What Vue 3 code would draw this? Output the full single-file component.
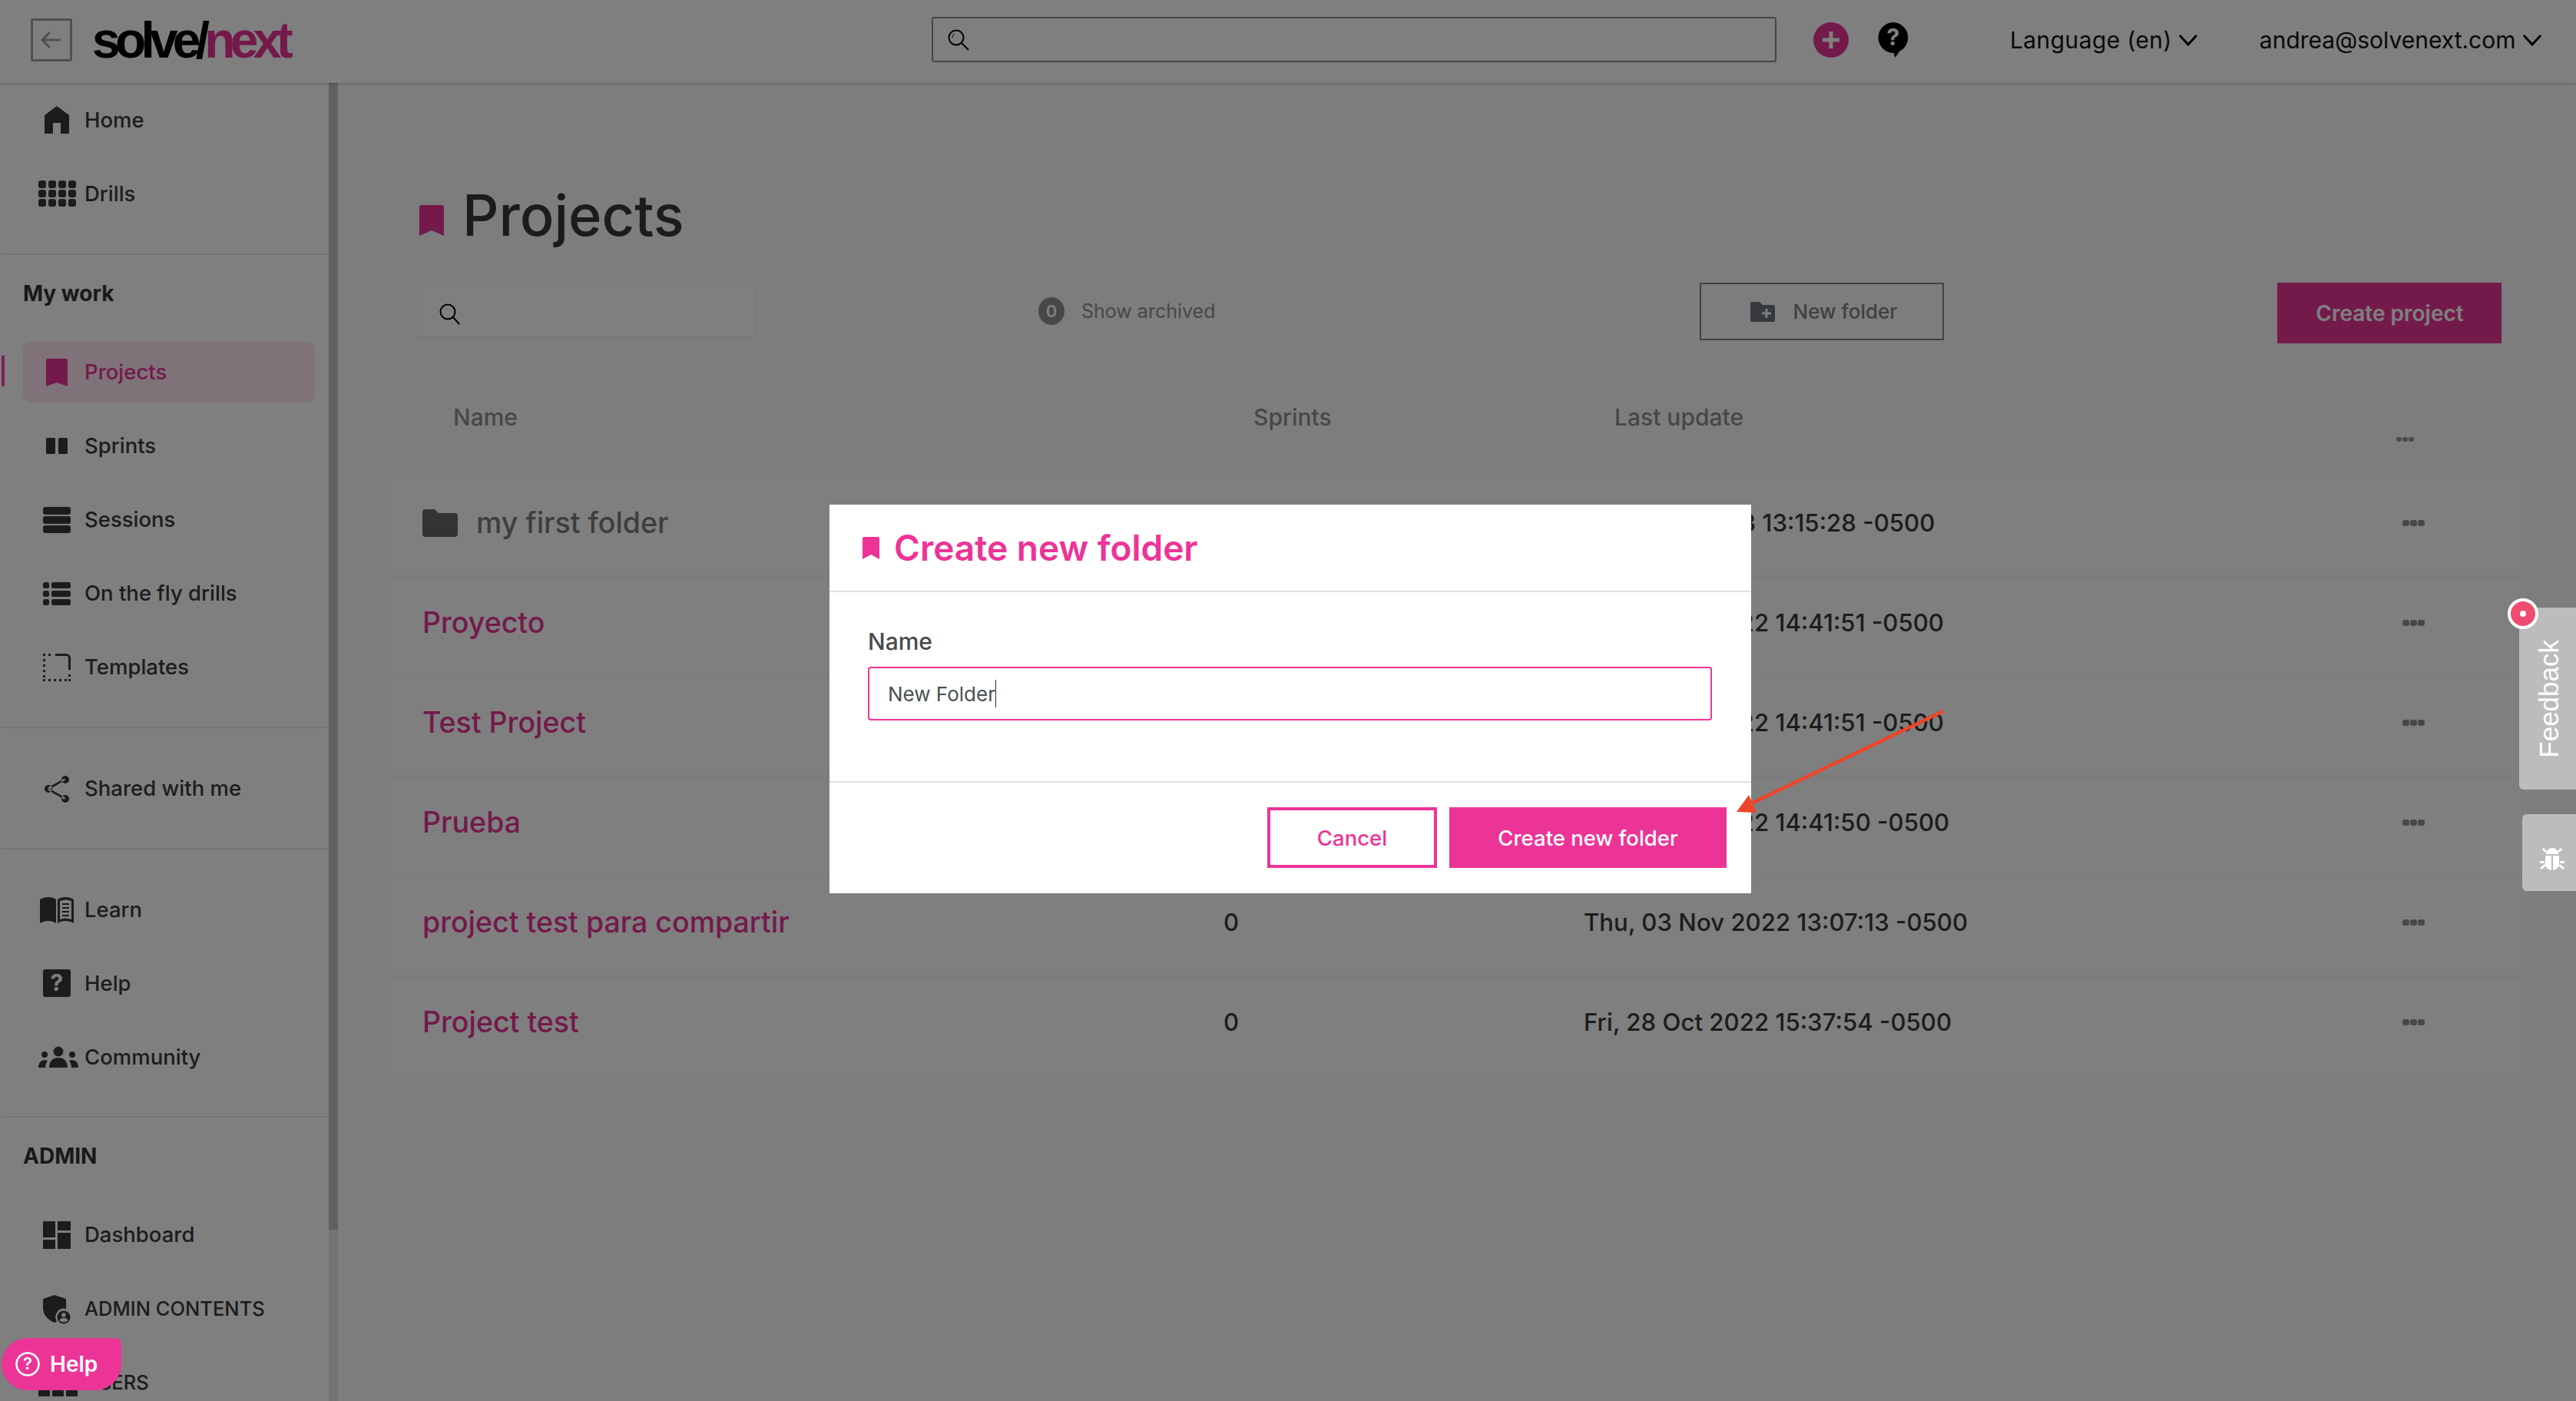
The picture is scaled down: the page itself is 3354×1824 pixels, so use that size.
<template>
  <div class="app">
    <header class="topbar">
      <div class="top-left">
        <button class="back">
          <svg width="30" height="26" viewBox="0 0 30 26"><path d="M27 13H4M13 3L3 13l10 10" fill="none" stroke="#a0a0a0" stroke-width="3"/></svg>
        </button>
        <div class="logo">solve/<span>next</span></div>
      </div>
      <div class="top-search">
        <svg class="lens" width="28" height="28" viewBox="0 0 28 28"><circle cx="11" cy="11" r="9.5" fill="none" stroke="#000" stroke-width="2"/><path d="M18 18l9 9" stroke="#000" stroke-width="2"/><path d="M6 11a5 5 0 0 1 3-5" fill="none" stroke="#000" stroke-width="1"/></svg>
      </div>
      <div class="plus"><svg width="26" height="26" viewBox="0 0 26 26"><path d="M13 2v22M2 13h22" stroke="#fff" stroke-width="5"/></svg></div>
      <div class="bubble">
        <svg width="40" height="46" viewBox="0 0 40 46"><path d="M20 0a20 20 0 0 1 8 38c-2 3-4 6-6 8l-1-6A20 20 0 0 1 20 0Z" fill="#000"/><text x="20" y="30" text-anchor="middle" class="bubble-q">?</text></svg>
      </div>
      <div class="lang">Language (en)<svg class="chev" width="26" height="16" viewBox="0 0 26 16"><path d="M2 2l11 12L24 2" fill="none" stroke="#000" stroke-width="3"/></svg></div>
      <div class="user">andrea@solvenext.com<svg class="chev" width="26" height="16" viewBox="0 0 26 16"><path d="M2 2l11 12L24 2" fill="none" stroke="#000" stroke-width="3"/></svg></div>
    </header>

    <div class="body">
      <aside class="sidebar">
        <section v-for="(group, i) in groups" :key="i" class="group" :class="group.cls">
          <h3 v-if="group.title">{{ group.title }}</h3>
          <a v-for="item in group.items" :key="item.label" class="nav" :class="{ active: item.active, upper: item.upper }">
            <svg class="nav-icon" width="52" height="40" viewBox="0 0 52 40">
              <path :d="icons[item.icon]" fill-rule="evenodd"/>
              <text v-if="item.icon === 'help'" x="26" y="30" text-anchor="middle" class="help-q">?</text>
            </svg>
            <span>{{ item.label }}</span>
          </a>
        </section>
      </aside>
      <div class="scroll"><div class="thumb"></div></div>

      <main class="main">
        <h1 class="title">
          <svg width="32" height="40" viewBox="0 0 32 40"><path d="M3 0H29a3 3 0 0 1 3 3V40L16 33 0 40V3a3 3 0 0 1 3-3Z" fill="#e63496"/></svg>
          Projects
        </h1>
        <div class="toolbar">
          <div class="search">
            <svg width="28" height="28" viewBox="0 0 28 28"><circle cx="11" cy="11" r="9.5" fill="none" stroke="#000" stroke-width="2"/><path d="M18 18l8 9" stroke="#000" stroke-width="2"/></svg>
          </div>
          <div class="toggle"><span class="knob">0</span>Show archived</div>
          <button class="new-folder">
            <svg width="32" height="26" viewBox="0 0 32 26"><path d="M2 0h10l4 4h14a2 2 0 0 1 2 2v18a2 2 0 0 1-2 2H2a2 2 0 0 1-2-2V2a2 2 0 0 1 2-2Z" fill="#6c747c"/><path d="M21 9v12M15 15h12" stroke="#fff" stroke-width="3"/></svg>
            New folder
          </button>
          <button class="create">Create project</button>
        </div>

        <div class="table-head">
          <span>Name</span><span>Sprints</span><span>Last update</span>
          <i class="dots small"><b></b><b></b><b></b></i>
        </div>
        <div class="rows">
          <div v-for="row in rows" :key="row.name" class="row">
            <div class="name" :class="{ folder: row.folder }">
              <svg v-if="row.folder" width="46" height="36" viewBox="0 0 46 36"><path d="M4 0h12l5 5h21a4 4 0 0 1 4 4v23a4 4 0 0 1-4 4H4a4 4 0 0 1-4-4V4a4 4 0 0 1 4-4Z" fill="#666"/></svg>
              {{ row.name }}
            </div>
            <div class="count">{{ row.sprints }}</div>
            <div class="date">{{ row.date }}</div>
            <i class="dots"><b></b><b></b><b></b></i>
          </div>
        </div>
      </main>
    </div>

    <div class="overlay"></div>

    <div class="modal">
      <div class="modal-head">
        <svg width="22" height="29" viewBox="0 0 22 29"><path d="M2 0H20a2 2 0 0 1 2 2V29L11 23 0 29V2a2 2 0 0 1 2-2Z" fill="#ec3497"/></svg>
        Create new folder
      </div>
      <div class="modal-body">
        <label>Name</label>
        <div class="field">New Folder<span class="caret"></span></div>
      </div>
      <div class="modal-foot">
        <button class="cancel">Cancel</button>
        <button class="confirm">Create new folder</button>
      </div>
    </div>

    <svg class="arrow" width="290" height="145" viewBox="0 0 290 145">
      <path d="M280 6L26 128" stroke="#ee4528" stroke-width="4.5" fill="none"/>
      <path d="M11 137L27 115L37 138Z" fill="#ee4528"/>
    </svg>

    <div class="feedback">
      <span>Feedback</span>
      <div class="badge"><div></div></div>
    </div>
    <div class="bug">
      <svg width="34" height="34" viewBox="0 0 34 34"><path d="M9 11a8 8 0 0 1 16 0ZM8 13h8v19c-5-1-8-4-8-9ZM18 13h8v10c0 5-3 8-8 9ZM1 20h6v3H1ZM27 20h6v3h-6ZM4 5l2-2 4 4-2 2ZM30 5l-2-2-4 4 2 2ZM3 31l-2-2 6-5 2 2ZM31 31l2-2-6-5-2 2Z" fill="#fff"/></svg>
    </div>
    <div class="help-btn">
      <svg width="32" height="32" viewBox="0 0 32 32"><circle cx="16" cy="16" r="14.5" fill="none" stroke="#fff" stroke-width="2.5"/><text x="16" y="23" text-anchor="middle" class="help-btn-q">?</text></svg>
      Help
    </div>
  </div>
</template>

<script setup>
const rr = (x, y, w, h, r = 2) =>
  `M${x + r} ${y}h${w - 2 * r}a${r} ${r} 0 0 1 ${r} ${r}v${h - 2 * r}a${r} ${r} 0 0 1 ${-r} ${r}h${-(w - 2 * r)}a${r} ${r} 0 0 1 ${-r} ${-r}v${-(h - 2 * r)}a${r} ${r} 0 0 1 ${r} ${-r}Z`
const dot = (cx, cy, r) => `M${cx - r} ${cy}a${r} ${r} 0 1 0 ${2 * r} 0a${r} ${r} 0 1 0 ${-2 * r} 0Z`

const grid = []
for (const y of [3, 15, 27]) for (const x of [2, 15, 28, 41]) grid.push(rr(x, y, 10, 10, 3))

let dashed = 'M24 3H38a6 6 0 0 1 6 6V24H41V9a3 3 0 0 0-3-3H24Z'
for (const y of [3, 10, 17, 24, 31]) dashed += rr(8, y, 3, 3, 0)
for (const x of [8, 15, 22, 29, 36]) dashed += rr(x, 36, 3, 3, 0)
dashed += rr(15, 3, 3, 3, 0) + rr(41, 30, 3, 3, 0) + rr(41, 36, 3, 3, 0)

const icons = {
  home: 'M26 2L42 14V38H31V24H21V38H10V14Z',
  drills: grid.join(''),
  bookmark: 'M14 3H38a2 2 0 0 1 2 2V39L26 34 12 39V5a2 2 0 0 1 2-2Z',
  sprints: rr(12, 10, 12, 21, 1.5) + rr(28, 10, 12, 21, 1.5),
  sessions: rr(8, 4, 36, 10, 3) + rr(8, 16, 36, 10, 3) + rr(8, 28, 36, 10, 3),
  fly: rr(8, 6, 8, 8, 2.5) + rr(8, 17, 8, 8, 2.5) + rr(8, 28, 8, 8, 2.5) + rr(19, 6, 25, 8, 2.5) + rr(19, 17, 25, 8, 2.5) + rr(19, 28, 25, 8, 2.5),
  templates: dashed,
  share: dot(37, 9, 5) + dot(15, 21, 5) + dot(37, 34, 5) + 'M14 19.5L36 7.5L37 9.5L16 22ZM14 22.5L16 20.5L37 32.5L36 35Z',
  learn: 'M4 7C10 3 20 3 25 7V38C20 34 10 34 4 38ZM27 7C32 3 42 3 48 7V38C42 34 32 34 27 38ZM30 9V33C35 31 40 31 45 33V9C40 7 35 7 30 9ZM33 12H42V14H33ZM33 17H42V19H33ZM33 22H42V24H33ZM33 27H42V29H33Z',
  help: rr(8, 2, 36, 36, 3),
  community: dot(28, 13, 6.5) + 'M16 34C16 25 21 21 28 21S40 25 40 34Z' + dot(10, 17, 4) + dot(46, 17, 4) + 'M2 34C2 28 5 24 11 24L14 25C12 28 11 31 11 34ZM54 34C54 28 51 24 45 24L42 25C44 28 45 31 45 34Z',
  dashboard: rr(8, 3, 16, 21, 0) + rr(8, 27, 16, 12, 0) + rr(27, 3, 17, 12, 0) + rr(27, 18, 17, 21, 0),
  shield: 'M23 3L38 8V21A11 11 0 0 0 26 37.5L23 39C15 36 8 29 8 20V8Z' + dot(35, 32, 8.5) + dot(35, 29, 2.8) + 'M29.5 36.5C30 33.5 32 33 35 33S40 33.5 40.5 36.5C37 39 33 39 29.5 36.5Z',
  users: rr(2, 31, 15, 8, 1) + rr(20, 31, 15, 8, 1) + rr(38, 31, 15, 8, 1)
}

const groups = [
  { cls: 'g-top', items: [{ label: 'Home', icon: 'home' }, { label: 'Drills', icon: 'drills' }] },
  {
    cls: 'g-work',
    title: 'My work',
    items: [
      { label: 'Projects', icon: 'bookmark', active: true },
      { label: 'Sprints', icon: 'sprints' },
      { label: 'Sessions', icon: 'sessions' },
      { label: 'On the fly drills', icon: 'fly' },
      { label: 'Templates', icon: 'templates' }
    ]
  },
  { cls: 'g-shared', items: [{ label: 'Shared with me', icon: 'share' }] },
  {
    cls: 'g-learn',
    items: [
      { label: 'Learn', icon: 'learn' },
      { label: 'Help', icon: 'help' },
      { label: 'Community', icon: 'community' }
    ]
  },
  {
    cls: 'g-admin',
    title: 'ADMIN',
    items: [
      { label: 'Dashboard', icon: 'dashboard' },
      { label: 'ADMIN CONTENTS', icon: 'shield', upper: true },
      { label: 'USERS', icon: 'users', upper: true }
    ]
  }
]

const rows = [
  { name: 'my first folder', folder: true, sprints: '', date: 'Fri, 6 Jan 2023 13:15:28 -0500' },
  { name: 'Proyecto', sprints: 0, date: 'Fri, 28 Oct 2022 14:41:51 -0500' },
  { name: 'Test Project', sprints: 0, date: 'Fri, 28 Oct 2022 14:41:51 -0500' },
  { name: 'Prueba', sprints: 0, date: 'Fri, 28 Oct 2022 14:41:50 -0500' },
  { name: 'project test para compartir', sprints: 0, date: 'Thu, 03 Nov 2022 13:07:13 -0500' },
  { name: 'Project test', sprints: 0, date: 'Fri, 28 Oct 2022 15:37:54 -0500' }
]
</script>

<style>
html, body {
  margin: 0;
  background: #fff;
}
</style>

<style scoped>
.app {
  position: relative;
  width: 3354px;
  height: 1824px;
  overflow: hidden;
  background: #fbfbfb;
  font-family: Inter, "Liberation Sans", sans-serif;
  color: #383838;
}
button {
  font-family: inherit;
  cursor: pointer;
}

/* top bar */
.topbar {
  display: flex;
  align-items: center;
  height: 108px;
  box-sizing: border-box;
  padding-bottom: 5px;
  background: #fff;
  box-shadow: 0 1px 3px rgba(0, 0, 0, 0.25);
  position: relative;
  z-index: 1;
}
.top-left {
  display: flex;
  align-items: center;
  width: 1213px;
  padding-left: 40px;
  box-sizing: border-box;
}
.back {
  display: flex;
  align-items: center;
  justify-content: center;
  width: 54px;
  height: 56px;
  padding: 0;
  border: 3px solid #a0a0a0;
  border-radius: 3px;
  background: none;
}
.logo {
  margin-left: 26px;
  font-family: "Liberation Sans", sans-serif;
  font-weight: 700;
  font-size: 66px;
  line-height: 66px;
  letter-spacing: -6.8px;
  color: #000;
}
.logo span {
  color: #e63496;
}
.top-search {
  display: flex;
  align-items: center;
  width: 1100px;
  height: 59px;
  box-sizing: border-box;
  padding-left: 19px;
  border: 2px solid #8c8c8c;
  border-radius: 3px;
}
.plus {
  display: flex;
  align-items: center;
  justify-content: center;
  width: 46px;
  height: 46px;
  margin-left: 48px;
  border-radius: 50%;
  background: #e63496;
}
.bubble {
  display: flex;
  margin-left: 38px;
}
.bubble-q {
  font: 700 30px Inter, sans-serif;
  fill: #fff;
}
.lang, .user {
  display: flex;
  align-items: center;
  gap: 8px;
  font-size: 30px;
  color: #111;
}
.lang {
  margin-left: 132px;
  letter-spacing: 0.4px;
}
.user {
  margin-left: 80px;
}

/* sidebar */
.body {
  display: flex;
  height: 1716px;
}
.sidebar {
  width: 428px;
  box-sizing: border-box;
  border-left: 2px solid #fff;
  background: #fff;
  overflow: hidden;
}
.group {
  border-bottom: 2px solid #e8e8e8;
}
.g-top { padding-bottom: 30px; }
.g-work { padding-bottom: 30px; }
.g-shared { padding: 30px 0; }
.g-learn { padding: 30px 0 29px; }
.g-admin { border-bottom: 0; }
.group h3 {
  display: flex;
  align-items: center;
  height: 104px;
  margin: 0;
  padding: 0 0 4px 28px;
  box-sizing: border-box;
  font-size: 28px;
  font-weight: 700;
  color: #333;
}
.nav {
  position: relative;
  display: flex;
  align-items: center;
  height: 96px;
  font-size: 27.5px;
  font-weight: 500;
  z-index: 0;
}
.nav.upper {
  font-size: 25.5px;
}
.nav-icon {
  margin-left: 46px;
  margin-right: 10px;
  overflow: visible;
  flex-shrink: 0;
  fill: #383838;
}
.help-q {
  font: 700 30px Inter, sans-serif;
  fill: #fff;
}
.nav.active {
  color: #e63496;
}
.nav.active .nav-icon {
  fill: #e63496;
}
.nav.active::before {
  content: "";
  position: absolute;
  z-index: -1;
  left: 28px;
  right: 18px;
  top: 9px;
  bottom: 8px;
  border-radius: 10px;
  background: #ffe4f0;
}
.nav.active::after {
  content: "";
  position: absolute;
  left: -2px;
  top: 27px;
  width: 6px;
  height: 40px;
  background: #ff3fb0;
}
.scroll {
  width: 12px;
  background: #e6e6e6;
}
.thumb {
  height: 1493px;
  background: #c0c0c0;
}

/* page */
.main {
  flex: 1;
  padding: 0 64px 0 70px;
}
.title {
  display: flex;
  align-items: center;
  gap: 24px;
  height: 100px;
  margin: 122px 0 0 36px;
  font-size: 74px;
  font-weight: 500;
}
.title svg {
  margin-top: 14px;
}
.toolbar {
  display: flex;
  align-items: flex-start;
  margin: 38px 0 0 32px;
}
.search {
  display: flex;
  align-items: center;
  width: 440px;
  height: 70px;
  box-sizing: border-box;
  padding: 12px 0 0 30px;
  background: #fff;
  border-radius: 3px;
  box-shadow: 0 2px 5px rgba(0, 0, 0, 0.08);
}
.toggle {
  display: flex;
  align-items: center;
  gap: 22px;
  height: 74px;
  margin-left: 370px;
  font-size: 25px;
  color: #909090;
}
.knob {
  display: flex;
  align-items: center;
  justify-content: center;
  width: 34px;
  height: 36px;
  border-radius: 50%;
  background: #909090;
  color: #fff;
  font-size: 22px;
  font-weight: 600;
}
.new-folder {
  display: flex;
  align-items: center;
  justify-content: center;
  gap: 24px;
  width: 318px;
  height: 75px;
  margin-left: 631px;
  padding: 0 0 0 4px;
  border: 2px solid #7c858d;
  background: none;
  font-size: 26px;
  font-weight: 500;
  color: #808080;
}
.create {
  width: 292px;
  height: 79px;
  margin-left: 434px;
  border: 0;
  background: #e63496;
  color: #fff;
  font-size: 28px;
  font-weight: 600;
}

/* table */
.table-head {
  display: grid;
  grid-template-columns: 1042px 470px 1018px 1fr;
  align-items: center;
  height: 86px;
  margin-top: 53px;
  padding-left: 80px;
  font-size: 30px;
  font-weight: 500;
  color: #8e8e8e;
}
.rows {
  display: flex;
  flex-direction: column;
  gap: 8px;
  margin-top: 39px;
}
.row {
  display: grid;
  grid-template-columns: 1043px 469px 1066px 1fr;
  align-items: center;
  height: 122px;
  box-sizing: border-box;
  padding: 0 0 11px 40px;
  background: #fff;
  font-size: 31.2px;
  font-weight: 500;
}
.name {
  display: flex;
  align-items: center;
  gap: 24px;
  font-size: 37.5px;
  font-weight: 500;
  color: #e63496;
}
.name.folder {
  color: #7c7c7c;
}
.date, .count {
  color: #383838;
}
.dots {
  display: flex;
  gap: 1px;
}
.dots b {
  width: 9px;
  height: 8px;
  border-radius: 3px;
  background: #909090;
}
.dots.small {
  margin-top: 58px;
}
.dots.small b {
  width: 7px;
  height: 6px;
}

/* dim layer + dialog */
.overlay {
  position: absolute;
  inset: 0;
  z-index: 5;
  background: rgba(0, 0, 0, 0.5);
}
.modal {
  position: absolute;
  z-index: 6;
  left: 1080px;
  top: 657px;
  width: 1200px;
  height: 506px;
  background: #fff;
}
.modal-head {
  display: flex;
  align-items: center;
  gap: 19px;
  height: 112px;
  padding-left: 43px;
  border-bottom: 2px solid #e1e1e4;
  font-size: 46px;
  font-weight: 600;
  color: #ec3497;
}
.modal-body {
  height: 248px;
  box-sizing: border-box;
  padding: 46px 51px 0 50px;
  border-bottom: 2px solid #e1e1e4;
}
.modal-body label {
  display: block;
  font-size: 30px;
  line-height: 36px;
  font-weight: 500;
  color: #4a4a4a;
}
.field {
  display: flex;
  align-items: center;
  height: 70px;
  box-sizing: border-box;
  margin-top: 15px;
  padding-left: 24px;
  border: 2px solid #ec3497;
  border-radius: 4px;
  font-size: 26px;
  color: #4a4f55;
}
.caret {
  width: 1px;
  height: 36px;
  background: #333;
}
.modal-foot {
  display: flex;
  justify-content: flex-end;
  gap: 16px;
  padding: 32px 32px 0 0;
}
.modal-foot button {
  height: 79px;
  font-size: 27.5px;
  font-weight: 500;
}
.cancel {
  width: 221px;
  background: #fff;
  border: 4px solid #ec3497;
  color: #ec3497;
}
.confirm {
  width: 361px;
  border: 0;
  background: #ec3497;
  color: #fff;
}

/* things floating above the dim layer */
.arrow {
  position: absolute;
  z-index: 7;
  left: 2250px;
  top: 920px;
}
.feedback {
  position: absolute;
  z-index: 7;
  right: 0;
  top: 791px;
  display: flex;
  align-items: center;
  justify-content: center;
  width: 74px;
  height: 237px;
  box-sizing: border-box;
  padding-left: 4px;
  background: #bcbcbc;
  border-radius: 6px 0 0 6px;
}
.feedback span {
  writing-mode: vertical-rl;
  transform: rotate(180deg);
  font-family: "Liberation Sans", sans-serif;
  font-size: 35px;
  color: #fff;
}
.badge {
  position: absolute;
  left: -15px;
  top: -12px;
  display: flex;
  align-items: center;
  justify-content: center;
  width: 32px;
  height: 32px;
  border: 4px solid #fff;
  border-radius: 50%;
  background: #ef4d6f;
}
.badge div {
  width: 8px;
  height: 8px;
  border-radius: 50%;
  background: #fff;
}
.bug {
  position: absolute;
  z-index: 7;
  right: 0;
  top: 1060px;
  display: flex;
  align-items: center;
  justify-content: center;
  width: 70px;
  height: 100px;
  padding: 16px 0 0 8px;
  box-sizing: border-box;
  background: #bcbcbc;
  border-radius: 6px 0 0 6px;
}
.help-btn {
  position: absolute;
  z-index: 7;
  left: 2px;
  top: 1742px;
  display: flex;
  align-items: center;
  gap: 13px;
  width: 156px;
  height: 68px;
  box-sizing: border-box;
  padding-left: 18px;
  background: #ec3497;
  border-radius: 34px 8px 34px 34px;
  color: #fff;
  font-size: 28px;
  font-weight: 600;
}
.help-btn-q {
  font: 600 22px Inter, sans-serif;
  fill: #fff;
}
</style>
